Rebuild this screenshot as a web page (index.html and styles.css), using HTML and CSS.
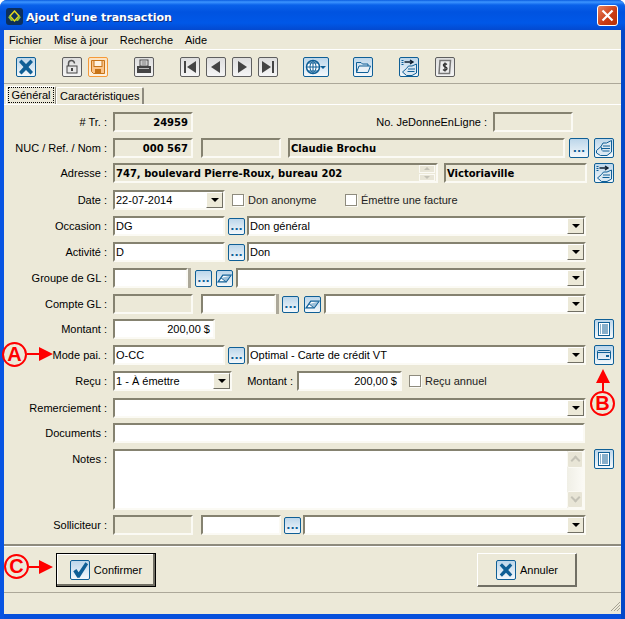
FILE: index.html
```html
<!doctype html>
<html>
    <head>
        <meta name="viewport" content="width=device-width, initial-scale=1.0">
        <title>Ajout d'une transaction</title>
        <link rel="stylesheet" href="styles.css">
    </head>
    <body>
        <svg class="sprites" width="0" height="0">
            <symbol id="i-x" viewBox="0 0 20 20"><path d="M3 5 5.500 2.500 10 7 14.500 2.500 17 5 12.500 10 17 15 14.500 17.500 10 13 5.500 17.500 3 15 7.500 10Z" fill="#0f5f96"/></symbol>
            <symbol id="i-lock" viewBox="0 0 20 20"><path d="M6.500 9V6.500a3 3 0 0 1 6 0" fill="none" stroke="#555" stroke-width="1.500"/><rect x="5" y="9" width="10" height="7" fill="#e8e8e8" stroke="#444"/><rect x="9" y="11" width="2" height="3" fill="#444"/></symbol>
            <symbol id="i-save" viewBox="0 0 20 20"><path d="M3.500 3.500H16.500V16.500H5.500L3.500 14.500Z" fill="#fbc48a" stroke="#c77418"/><rect x="6" y="3.500" width="8" height="6" fill="#fff3e2" stroke="#c77418"/><rect x="7" y="12" width="6" height="4.500" fill="#c77418"/></symbol>
            <symbol id="i-print" viewBox="0 0 20 20"><rect x="6" y="3" width="8" height="6" fill="#eee" stroke="#444"/><path d="M7.500 5h5M7.500 7h5" stroke="#666"/><rect x="3" y="9" width="14" height="7" fill="#444"/><rect x="5" y="11" width="10" height="1" fill="#bbb"/></symbol>
            <symbol id="i-first" viewBox="0 0 20 20"><rect x="4" y="4" width="2" height="12" fill="#444"/><path d="M16 4V16L7 10Z" fill="#444"/></symbol>
            <symbol id="i-prev" viewBox="0 0 20 20"><path d="M14 4V16L5 10Z" fill="#444"/></symbol>
            <symbol id="i-next" viewBox="0 0 20 20"><path d="M6 4V16L15 10Z" fill="#444"/></symbol>
            <symbol id="i-last" viewBox="0 0 20 20"><path d="M4 4V16L13 10Z" fill="#444"/><rect x="14" y="4" width="2" height="12" fill="#444"/></symbol>
            <symbol id="i-globe" viewBox="0 0 20 20"><circle cx="10" cy="10" r="6.500" fill="#fff" stroke="#0f5f96" stroke-width="1.500"/><path d="M3.500 10h13M10 3.500v13M5 6h10M5 14h10M10 3.500c-4 3-4 10 0 13M10 3.500c4 3 4 10 0 13" fill="none" stroke="#0f5f96"/></symbol>
            <symbol id="i-folder" viewBox="0 0 20 20"><path d="M3.500 15.500V5.500H8L9.500 7H15V9" fill="none" stroke="#0f5f96"/><path d="M3.500 15.500 6 9H17.500L15 15.500Z" fill="#e9f1f7" stroke="#0f5f96"/></symbol>
            <symbol id="i-hand" viewBox="0 0 20 20"><path d="M2.500 12.500 7 8.500 9 5 12.500 5 17.500 2.500V14L13 17.500H6.500L2.500 15Z" fill="#dbe8f2" stroke="#0f5f96"/><path d="M9 8h7M8 10.500h8M8.500 13h7M7 8.500l1 4" stroke="#0f5f96"/></symbol>
            <symbol id="i-transfer" viewBox="0 0 20 20"><path d="M5.500 5H13M11 3l3 2-3 2" fill="none" stroke="#123" stroke-width="1.400"/><path d="M2.500 3.500h2M2.500 5.500h2M2.500 7.500h2" stroke="#0f5f96"/><path d="M3.500 15 7.500 11.500 9.500 9 13 9 17.500 7V16L13 18.500H7.500Z" fill="#dbe8f2" stroke="#0f5f96"/><path d="M9 12h7M8.500 14.500h7" stroke="#0f5f96"/></symbol>
            <symbol id="i-dollar" viewBox="0 0 20 20"><path d="M5 3.500H15.500L14.500 16.500H4Z" fill="#eee" stroke="#777" stroke-width="1.500"/><path d="M12 7.500C10 6 8 7 8.500 8.500S12 10 12 11.500 9.500 14 8 12.500M10 5.500V14.500" fill="none" stroke="#333" stroke-width="1.300"/></symbol>
            <symbol id="i-erase" viewBox="0 0 20 20"><path d="M2.500 14 8 6H17.500L12 14Z" fill="#fff" stroke="#0f5f96" stroke-width="1.500"/><path d="M6 9.500 12 14 17.500 6.500" fill="#9cc0da" stroke="#0f5f96"/></symbol>
            <symbol id="i-list" viewBox="0 0 20 20"><rect x="4.500" y="3.500" width="11" height="13" fill="#fff" stroke="#0f5f96"/><path d="M6 6h1M6 8h1M6 10h1M6 12h1M6 14h1M8 6h6M8 8h6M8 10h6M8 12h6M8 14h6" stroke="#0f5f96"/></symbol>
            <symbol id="i-wallet" viewBox="0 0 20 20"><rect x="3.500" y="5.500" width="13" height="9" rx="1" fill="none" stroke="#0f5f96"/><path d="M3.500 7.500h13" stroke="#0f5f96"/><rect x="12" y="10" width="3" height="2" fill="#0f5f96"/></symbol>
            <symbol id="i-check" viewBox="0 0 20 20"><path d="M2.500 11.500 6 9 8.500 12.500 16 1.500 19 3.500 9.500 18.500H7Z" fill="#0f5f96"/></symbol>
        </svg>

        <div class="window">
            <div class="titlebar">
                <svg class="app-icon" width="17" height="17" viewBox="0 0 17 17">
                    <rect width="17" height="17" rx="3" fill="#0c2f5c"/>
                    <path d="M8.500 3 13 8 8.500 13 4 8Z" fill="none" stroke="#e4d81c" stroke-width="1.500"/>
                    <path d="M2 9 5 13H7L4 8ZM15 9 12 13H10L13 8Z" fill="#8fc23c"/>
                </svg>
                <span class="title">Ajout d'une transaction</span>
                <div class="close"><svg width="13" height="13" viewBox="0 0 13 13"><path d="M1.500 1.500 11.500 11.500M11.500 1.500 1.500 11.500" stroke="#fff" stroke-width="2.200"/></svg></div>
            </div>

            <div class="menubar">
                <span>Fichier</span>
                <span>Mise à jour</span>
                <span>Recherche</span>
                <span>Aide</span>
            </div>

            <div class="toolbar">
                <button class="tool ml12"><svg><use href="#i-x"/></svg></button>
                <button class="tool grey ml26"><svg><use href="#i-lock"/></svg></button>
                <button class="tool hot ml6"><svg><use href="#i-save"/></svg></button>
                <button class="tool grey ml26"><svg><use href="#i-print"/></svg></button>
                <button class="tool grey ml26"><svg><use href="#i-first"/></svg></button>
                <button class="tool grey ml6"><svg><use href="#i-prev"/></svg></button>
                <button class="tool grey ml6"><svg><use href="#i-next"/></svg></button>
                <button class="tool grey ml6"><svg><use href="#i-last"/></svg></button>
                <button class="tool wide ml25"><svg><use href="#i-globe"/></svg><i class="mini-arrow"></i></button>
                <button class="tool ml24"><svg><use href="#i-folder"/></svg></button>
                <button class="tool ml26"><svg><use href="#i-transfer"/></svg></button>
                <button class="tool grey ml16"><svg><use href="#i-dollar"/></svg></button>
            </div>

            <div class="tabs">
                <div class="tab active"><span>Général</span></div>
                <div class="tab">Caractéristiques</div>
            </div>

            <div class="form">
                <div class="row first">
                    <label># Tr. :</label>
                    <div class="field ro bold right w80">24959</div>
                    <label class="ml-auto">No. JeDonneEnLigne :</label>
                    <div class="field ro w80 ml6 end14"></div>
                </div>
                <div class="row">
                    <label>NUC / Ref. / Nom :</label>
                    <div class="field ro bold right w80">000 567</div>
                    <div class="field ro w80 ml8"></div>
                    <div class="field ro bold w277 ml7">Claudie Brochu</div>
                    <button class="tool dots ml4">...</button>
                    <button class="tool ml5"><svg><use href="#i-hand"/></svg></button>
                </div>
                <div class="row tight">
                    <label>Adresse :</label>
                    <div class="field ro bold w325">747, boulevard Pierre-Roux, bureau 202
                        <div class="spin"><i class="up"></i><i class="down"></i></div>
                    </div>
                    <div class="field ro bold w143 ml6">Victoriaville</div>
                    <button class="tool ml7"><svg><use href="#i-transfer"/></svg></button>
                </div>
                <div class="row loose">
                    <label>Date :</label>
                    <div class="field w112">22-07-2014<i class="arrow"></i></div>
                    <div class="check w113 ml7"><i></i>Don anonyme</div>
                    <div class="check"><i></i>Émettre une facture</div>
                </div>
                <div class="row">
                    <label>Occasion :</label>
                    <div class="field w112">DG</div>
                    <button class="tool dots small ml3">...</button>
                    <div class="field w339 ml2">Don général<i class="arrow"></i></div>
                </div>
                <div class="row">
                    <label>Activité :</label>
                    <div class="field w112">D</div>
                    <button class="tool dots small ml3">...</button>
                    <div class="field w339 ml2">Don<i class="arrow"></i></div>
                </div>
                <div class="row">
                    <label>Groupe de GL :</label>
                    <div class="field w75">&nbsp;</div>
                    <i class="grip"></i>
                    <button class="tool dots small ml4">...</button>
                    <button class="tool small ml4"><svg><use href="#i-erase"/></svg></button>
                    <div class="field w350 ml3">&nbsp;<i class="arrow"></i></div>
                </div>
                <div class="row">
                    <label>Compte GL :</label>
                    <div class="field ro w80"></div>
                    <div class="field w75 ml8">&nbsp;</div>
                    <i class="grip"></i>
                    <button class="tool dots small ml3">...</button>
                    <button class="tool small ml5"><svg><use href="#i-erase"/></svg></button>
                    <div class="field w262 ml3">&nbsp;<i class="arrow"></i></div>
                </div>
                <div class="row tight">
                    <label>Montant :</label>
                    <div class="field right w102">200,00 $</div>
                    <button class="tool push-right"><svg><use href="#i-list"/></svg></button>
                </div>
                <div class="row">
                    <label>Mode pai. :</label>
                    <div class="field w112">O-CC</div>
                    <button class="tool dots small ml3">...</button>
                    <div class="field w339 ml2">Optimal - Carte de crédit VT<i class="arrow"></i></div>
                    <button class="tool ml8"><svg><use href="#i-wallet"/></svg></button>
                </div>
                <div class="row">
                    <label>Reçu :</label>
                    <div class="field w119">1 - À émettre<i class="arrow"></i></div>
                    <label class="amount">Montant :</label>
                    <div class="field right w105">200,00 $</div>
                    <div class="check ml7"><i></i>Reçu annuel</div>
                </div>
                <div class="row loose">
                    <label>Remerciement :</label>
                    <div class="field w473">&nbsp;<i class="arrow"></i></div>
                </div>
                <div class="row tight">
                    <label>Documents :</label>
                    <div class="field w472"></div>
                </div>
                <div class="row notes">
                    <label>Notes :</label>
                    <div class="field w472 area">
                        <div class="scroll"><i class="up"></i><i class="down"></i></div>
                    </div>
                    <button class="tool ml9"><svg><use href="#i-list"/></svg></button>
                </div>
                <div class="row tight">
                    <label>Solliciteur :</label>
                    <div class="field ro w80"></div>
                    <div class="field w80 ml8">&nbsp;</div>
                    <button class="tool dots small ml3">...</button>
                    <div class="field w283 ml2">&nbsp;<i class="arrow"></i></div>
                </div>
            </div>

            <div class="actions">
                <button class="action default"><span class="action-icon"><svg><use href="#i-check"/></svg></span>Confirmer</button>
                <button class="action"><span class="action-icon"><svg><use href="#i-x"/></svg></span>Annuler</button>
            </div>

            <div class="statusbar">
                <svg class="resize" width="12" height="12" viewBox="0 0 12 12"><path d="M11 2 2 11M11 5 5 11M11 8 8 11" stroke="#a5a293" stroke-width="1"/></svg>
            </div>

            <div class="mark mark-a">A</div>
            <svg class="pointer pointer-a" width="26" height="14" viewBox="0 0 26 14"><path d="M0 6H12V0L26 7 12 14V8H0Z" fill="#f00"/></svg>
            <div class="mark mark-b">B</div>
            <svg class="pointer pointer-b" width="14" height="22" viewBox="0 0 14 22"><path d="M6 22V14H0L7 0 14 14H8V22Z" fill="#f00"/></svg>
            <div class="mark mark-c">C</div>
            <svg class="pointer pointer-c" width="24" height="14" viewBox="0 0 24 14"><path d="M0 6H10V0L24 7 10 14V8H0Z" fill="#f00"/></svg>
        </div>
    </body>
</html>
```

FILE: styles.css
```css
html,
body {
    margin: 0;
    padding: 0;
    background-color: #fff;
}

body {
    font-family: "Liberation Sans", "DejaVu Sans", sans-serif;
    font-size: 11px;
    color: #000;
}

.sprites {
    position: absolute;
}

.window {
    position: relative;
    width: 625px;
    height: 619px;
    box-sizing: border-box;
    padding: 0 4px 5px 4px;
    background-color: #ece9d8;
    border-radius: 7px 7px 0 0;
    overflow: hidden;
    box-shadow: inset 4px 0 0 #0754e2, inset -4px 0 0 #0348c8, inset 0 -5px 0 #0650dc;
}

.titlebar {
    display: flex;
    align-items: center;
    height: 30px;
    margin: 0 -4px;
    padding: 2px 7px 0 6px;
    box-sizing: border-box;
    background: linear-gradient(#0a5ce0 0, #3d95ff 2px, #0a62ea 5px, #0053e0 12px, #0058e8 23px, #0349cf 30px);
}

.app-icon {
    flex: none;
}

.title {
    margin-left: 3px;
    padding-top: 2px;
    font-family: "DejaVu Sans", sans-serif;
    font-size: 11px;
    font-weight: bold;
    color: #fff;
    text-shadow: 1px 1px 0 #0f2f80;
}

.close {
    display: flex;
    align-items: center;
    justify-content: center;
    width: 19px;
    height: 19px;
    margin-left: auto;
    margin-top: -2px;
    border: 1px solid #fff;
    border-radius: 3px;
    background: linear-gradient(135deg, #e8815c, #c93a12 60%, #b83208);
}

.menubar {
    display: flex;
    gap: 12px;
    height: 19px;
    padding-left: 5px;
    align-items: center;
}

.toolbar {
    display: flex;
    align-items: center;
    height: 33px;
    border-top: 1px solid #fff;
    border-bottom: 1px solid #aca899;
}

.tool {
    flex: none;
    display: block;
    width: 20px;
    height: 20px;
    padding: 0;
    box-sizing: border-box;
    border: 1px solid #0f5f96;
    border-radius: 2px;
    background: linear-gradient(#bcd6ea, #f4f8fb);
    font-family: inherit;
    position: relative;
}

.tool svg {
    position: absolute;
    left: -1px;
    top: -1px;
    width: 20px;
    height: 20px;
}

.tool.grey {
    border-color: #5f5f5f;
    background: linear-gradient(#dedede, #f5f5f5);
}

.tool.hot {
    border-color: #f59a3a;
    background: linear-gradient(#fde2bf, #fdf1e0);
}

.tool.wide {
    width: 26px;
}

.mini-arrow {
    position: absolute;
    right: 2px;
    top: 8px;
    border: 3px solid transparent;
    border-top: 3px solid #0f5f96;
    border-bottom: 0;
}

.dots {
    color: #0f5f96;
    font-family: "DejaVu Sans", sans-serif;
    font-size: 11px;
    font-weight: bold;
    line-height: 20px;
}

.tool.small {
    width: 17px;
    height: 17px;
    margin-top: 2px;
    line-height: 14px;
}

.tool.small svg {
    width: 17px;
    height: 17px;
}

.tabs {
    display: flex;
    align-items: flex-end;
    height: 20px;
    padding-left: 2px;
    border-bottom: 1px solid #fff;
}

.tab {
    height: 16px;
    line-height: 16px;
    padding: 0 3px;
    border: 1px solid #fff;
    border-bottom: 0;
    border-right: 2px solid #8e8b7e;
    border-radius: 2px 2px 0 0;
}

.tab.active {
    height: 18px;
    line-height: 16px;
    width: 50px;
    box-sizing: border-box;
    padding: 0;
    text-align: center;
    border-right: 1px solid #8e8b7e;
}

.tab.active span {
    display: inline-block;
    outline: 1px dotted #000;
    padding: 0 2px;
    line-height: 14px;
}

.form {
    height: 441px;
    box-sizing: border-box;
    padding-top: 7px;
    border-bottom: 2px solid #8e8b7e;
}

.row {
    display: flex;
    align-items: flex-start;
    height: 20px;
    margin-top: 6px;
}

.row.first {
    margin-top: 0;
}

.row.tight {
    margin-top: 5px;
}

.row.loose {
    margin-top: 7px;
}

.row.notes {
    height: 61px;
}

.row label {
    flex: none;
    width: 103px;
    margin-right: 6px;
    text-align: right;
    line-height: 20px;
    white-space: nowrap;
}

.row label.amount {
    width: 48px;
    margin: 0 4px 0 13px;
}

.row label.ml-auto {
    width: auto;
    margin-left: auto;
    margin-right: 0;
}

.field {
    flex: none;
    position: relative;
    height: 20px;
    box-sizing: border-box;
    padding: 0 1px;
    border: 2px solid;
    border-color: #858270 #fbfaf4 #fbfaf4 #858270;
    background-color: #fff;
    line-height: 17px;
    white-space: nowrap;
    overflow: hidden;
}

.field.ro {
    background-color: #ece9d8;
}

.field.bold {
    font-family: "DejaVu Sans", sans-serif;
    font-size: 10px;
    font-weight: bold;
}

.field.right {
    text-align: right;
    padding-right: 3px;
}

.field.area {
    height: 61px;
}

.arrow {
    position: absolute;
    right: 0;
    top: 0;
    width: 17px;
    height: 16px;
    box-sizing: border-box;
    border: 1px solid;
    border-color: #fff #716f64 #716f64 #fff;
    background-color: #ece9d8;
}

.arrow::after {
    content: "";
    position: absolute;
    left: 4px;
    top: 5px;
    border: 4px solid transparent;
    border-top: 4px solid #000;
    border-bottom: 0;
}

.spin {
    position: absolute;
    right: 1px;
    top: 0;
    width: 16px;
    height: 16px;
    display: flex;
    flex-direction: column;
    gap: 1px;
}

.spin i {
    position: relative;
    flex: 1;
    border: 1px solid #fbfaf4;
    background-color: #e8e5d6;
}

.spin i::after {
    content: "";
    position: absolute;
    left: 4px;
    top: 1px;
    border: 3px solid transparent;
}

.spin .up::after {
    border-bottom-color: #c4c2b6;
    border-top: 0;
}

.spin .down::after {
    border-top-color: #c4c2b6;
    border-bottom: 0;
}

.scroll {
    position: absolute;
    right: 0;
    top: 0;
    width: 16px;
    height: 57px;
    display: flex;
    flex-direction: column;
    justify-content: space-between;
    background: linear-gradient(to right, #f0efe6, #fbfaf5);
}

.scroll i {
    position: relative;
    height: 15px;
    border: 1px solid #fbfaf4;
    border-radius: 2px;
    background-color: #e8e5d6;
}

.scroll i::after {
    content: "";
    position: absolute;
    left: 4px;
    width: 5px;
    height: 5px;
    border: solid #c4c2b6;
    border-width: 2px 0 0 2px;
    transform: rotate(45deg);
}

.scroll .up::after {
    top: 5px;
}

.scroll .down::after {
    top: 2px;
    transform: rotate(225deg);
}

.grip {
    flex: none;
    width: 3px;
    height: 20px;
    background-color: #aca899;
}

.check {
    flex: none;
    display: flex;
    align-items: center;
    gap: 4px;
    line-height: 20px;
    height: 20px;
    color: #222;
}

.check i {
    width: 10px;
    height: 10px;
    border: 1px solid #8e8b7e;
    background-color: #fff;
    box-shadow: 1px 1px 0 #fbfaf4;
}

.w75 { width: 75px; }
.w80 { width: 80px; }
.w102 { width: 102px; }
.w105 { width: 105px; }
.w112 { width: 112px; }
.w113 { width: 113px; }
.w119 { width: 119px; }
.w143 { width: 143px; }
.w262 { width: 262px; }
.w277 { width: 277px; }
.w283 { width: 283px; }
.w325 { width: 325px; }
.w339 { width: 339px; }
.w350 { width: 350px; }
.w472 { width: 472px; }
.w473 { width: 473px; }

.ml2 { margin-left: 2px; }
.ml3 { margin-left: 3px; }
.ml4 { margin-left: 4px; }
.ml5 { margin-left: 5px; }
.ml6 { margin-left: 6px; }
.ml7 { margin-left: 7px; }
.ml8 { margin-left: 8px; }
.ml9 { margin-left: 9px; }
.ml12 { margin-left: 12px; }
.ml16 { margin-left: 16px; }
.ml24 { margin-left: 24px; }
.ml25 { margin-left: 25px; }
.ml26 { margin-left: 26px; }

.end14 {
    margin-right: 48px;
}

.push-right {
    margin-left: auto;
    margin-right: 7px;
}

.actions {
    display: flex;
    justify-content: space-between;
    height: 47px;
    box-sizing: border-box;
    padding: 6px 44px 0 52px;
    border-top: 1px solid #fff;
    border-bottom: 1px solid #aca899;
}

.action {
    display: flex;
    align-items: center;
    justify-content: center;
    gap: 4px;
    width: 100px;
    height: 34px;
    padding: 0;
    box-sizing: border-box;
    border: 1px solid;
    border-color: #fff #716f64 #716f64 #fff;
    background-color: #ece9d8;
    font: inherit;
    box-shadow: inset -1px -1px 0 #716f64;
}

.action.default {
    outline: 1px solid #000;
    outline-offset: -1px;
    box-shadow: inset -2px -2px 0 #716f64, inset 1px 1px 0 #fff;
}

.action-icon {
    display: block;
    width: 20px;
    height: 20px;
    box-sizing: border-box;
    border: 1px solid #0f5f96;
    border-radius: 2px;
    background: linear-gradient(#bcd6ea, #f4f8fb);
}

.action-icon svg {
    display: block;
    width: 18px;
    height: 18px;
}

.statusbar {
    position: relative;
    height: 19px;
}

.resize {
    position: absolute;
    right: 0;
    bottom: 0;
}

.mark {
    position: absolute;
    width: 21px;
    height: 21px;
    border: 2px solid #f00;
    border-radius: 50%;
    color: #f00;
    font-family: "Liberation Sans", sans-serif;
    font-size: 20px;
    font-weight: bold;
    line-height: 21px;
    text-align: center;
}

.mark-a { left: 2px; top: 342px; }
.mark-b { left: 590px; top: 391px; }
.mark-c { left: 4px; top: 554px; }

.pointer {
    position: absolute;
}

.pointer-a { left: 27px; top: 347px; }
.pointer-b { left: 596px; top: 369px; }
.pointer-c { left: 29px; top: 560px; }
```
